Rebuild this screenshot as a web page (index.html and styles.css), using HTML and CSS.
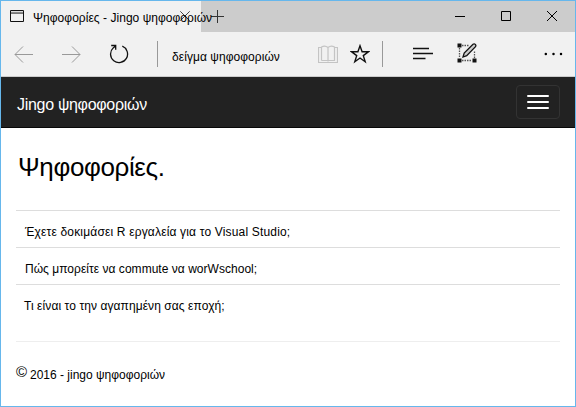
FILE: index.html
```
<!DOCTYPE html>
<html lang="el">
<head>
<meta charset="utf-8">
<title>Ψηφοφορίες - Jingo ψηφοφοριών</title>
<link rel="stylesheet" href="styles.css">
</head>
<body>
<div class="window">
  <header class="tabstrip">
    <div class="tab">
      <svg class="page-icon" width="14" height="12" viewBox="0 0 14 12"><path d="M.5.5h13v11H.5z" fill="none" stroke="#111"/><path d="M1 1h12v1H1z" fill="#ddd"/><path d="M1 2.500h12" stroke="#888"/><path d="M1 3.500h12" stroke="#777"/></svg>
      <span class="tab-title">Ψηφοφορίες - Jingo ψηφοφοριών</span>
      <svg class="tab-close" width="10" height="10" viewBox="0 0 10 10"><path d="M.3.3l9.4 9.4M9.7.3L.3 9.7" stroke="#444"/></svg>
    </div>
    <svg class="new-tab" width="13" height="13" viewBox="0 0 13 13"><path d="M0 6.5h13M6.5 0v13" stroke="#333"/></svg>
    <div class="controls">
      <svg width="10" height="10" viewBox="0 0 10 10"><path d="M0 5.5h10" stroke="#000"/></svg>
      <svg width="10" height="10" viewBox="0 0 10 10"><path d="M.5.5h9v9h-9z" fill="none" stroke="#000"/></svg>
      <svg width="10" height="10" viewBox="0 0 10 10"><path d="M0 0l10 10M10 0L0 10" stroke="#000"/></svg>
    </div>
  </header>
  <div class="toolbar">
    <svg class="back" width="19" height="17" viewBox="0 0 19 17"><path d="M19 8.5H1M9 .5l-8 8 8 8" fill="none" stroke="#999"/></svg>
    <svg class="forward" width="19" height="17" viewBox="0 0 19 17"><path d="M0 8.5h18M10 .5l8 8-8 8" fill="none" stroke="#999"/></svg>
    <svg class="reload" width="20" height="20" viewBox="0 0 20 20"><path d="M13.300 2.200A8.500 8.500 0 1 1 4.200 3.900L6.200 2.200M2.200 1.500h4.500v4.300" fill="none" stroke="#111" stroke-width="1.300"/></svg>
    <i class="divider first"></i>
    <span class="address">δείγμα ψηφοφοριών</span>
    <svg class="book" width="20" height="19" viewBox="0 0 20 19"><path d="M3 2.500H.5v15h19v-15H17M3.500 15.500V2q3.500-2 6.500.500 3-2.500 6.500-.500v13.500H3.500M10 2.500v14" fill="none" stroke="#c4c4c4" stroke-width="1.200"/></svg>
    <svg class="star" width="20" height="20" viewBox="0 0 20 20"><path d="M10 1.800l2.100 6h6.200l-5 3.800 1.900 6.200-5.200-3.800-5.200 3.800 1.900-6.200-5-3.800h6.200z" fill="none" stroke="#111" stroke-width="1.400"/></svg>
    <i class="divider second"></i>
    <svg class="hub" width="20" height="13" viewBox="0 0 20 13"><path d="M0 1.500h16M0 6.500h20M0 11.500h12.500" stroke="#111" stroke-width="1.300"/></svg>
    <svg class="note" width="20" height="20" viewBox="0 0 20 20"><path d="M5 2.500h7M2.500 5v10M5 17.500h10M17.500 15V8" fill="none" stroke="#555" stroke-width="1.300" stroke-dasharray="1.500 1"/><path d="M.5.500h4v4h-4zM.5 15.500h4v4h-4zM15.500 15.500h4v4h-4z" fill="#111"/><path d="M6 14l1.200-4L16 1.200q1.300-.8 2.300.2t.2 2.300L9.700 12.600z" fill="#ccc" stroke="#111" stroke-width="1.300"/></svg>
    <svg class="more" width="19" height="4" viewBox="0 0 19 4"><circle cx="1.800" cy="2" r="1.250"/><circle cx="9.500" cy="2" r="1.250"/><circle cx="17" cy="2" r="1.250"/></svg>
  </div>
  <nav class="navbar">
    <span class="brand">Jingo ψηφοφοριών</span>
    <div class="menu-button"><i></i><i></i><i></i></div>
  </nav>
  <main class="content">
    <h1>Ψηφοφορίες.</h1>
    <ul class="polls">
      <li class="poll-r">Έχετε δοκιμάσει R εργαλεία για το Visual Studio;</li>
      <li class="poll-commute">Πώς μπορείτε να commute να worWschool;</li>
      <li class="poll-season">Τι είναι το την αγαπημένη σας εποχή;</li>
    </ul>
    <footer><span class="copy">©</span><span class="owner">2016 - jingo ψηφοφοριών</span></footer>
  </main>
</div>
</body>
</html>
```
FILE: styles.css
```
* { box-sizing: border-box; }
body { margin: 0; font: 12px/16px "Liberation Sans", Arial, sans-serif; color: #000; }
svg { display: block; flex: none; }
.window { width: 576px; height: 407px; border: 1px solid #66b7ec; background: #fff; overflow: hidden; }
.tabstrip { height: 31px; background: #ccc; display: flex; align-items: flex-start; }
.tab { width: 200px; height: 31px; background: #f1f1f1; display: flex; padding-left: 9px; flex: none; }
.page-icon { margin-top: 9px; }
.tab-title { width: 148px; margin: 9px 0 0 9px; white-space: nowrap; flex: none; position: relative; letter-spacing: .04px; }
.tab-close { margin: 10px 0 0 -1px; }
.new-tab { margin: 9px 0 0 10px; }
.controls { display: flex; gap: 36px; margin: 10px 18px 0 auto; }
.toolbar { height: 45px; background: #f1f1f1; border-bottom: 1px solid #ccc; display: flex; align-items: flex-start; }
.back { margin: 14px 0 0 13px; }
.forward { margin: 14px 0 0 29px; }
.reload { margin: 12px 0 0 28px; }
.divider { width: 1px; height: 26px; margin-top: 9px; background: #999; flex: none; }
.divider.first { margin-left: 28px; }
.address { width: 146px; margin: 17px 0 0 14px; white-space: nowrap; flex: none; letter-spacing: .06px; }
.book { margin: 13px 0 0 0; }
.star { margin: 12px 0 0 12px; }
.divider.second { margin-left: 12px; }
.hub { margin: 15px 0 0 30px; }
.note { margin: 11px 0 0 24px; }
.more { margin: 20px 0 0 67px; }
.navbar { height: 51px; background: #222; border-bottom: 1px solid #080808; display: flex; justify-content: space-between; padding: 8px 15px 0 16px; }
.brand { color: #fff; font-size: 16px; line-height: 20px; margin-top: 10px; white-space: nowrap; letter-spacing: -.3px; }
.menu-button { width: 44px; height: 34px; border: 1px solid #333; border-radius: 4px; display: flex; flex-direction: column; align-items: center; padding-top: 9px; gap: 4px; }
.menu-button i { width: 22px; height: 2px; background: #fff; border-radius: 1px; }
.content { padding: 0 15px; }
h1 { margin: 22px 0 0 2px; font-weight: 400; font-size: 26px; line-height: 34px; white-space: nowrap; letter-spacing: -.38px; }
.polls { list-style: none; margin: 26px 0 0; padding: 0; height: 132px; border-bottom: 1px solid #eee; }
.polls li { height: 37px; border-top: 1px solid #ddd; padding: 13px 0 0 9px; white-space: nowrap; }
.polls .poll-r { letter-spacing: .17px; }
.polls .poll-commute { letter-spacing: .03px; }
.polls .poll-season { letter-spacing: .08px; padding-left: 8px; }
footer { display: flex; padding-top: 22px; }
.copy { width: 14px; font-size: 15px; }
.owner { margin-top: 3px; white-space: nowrap; }
```
